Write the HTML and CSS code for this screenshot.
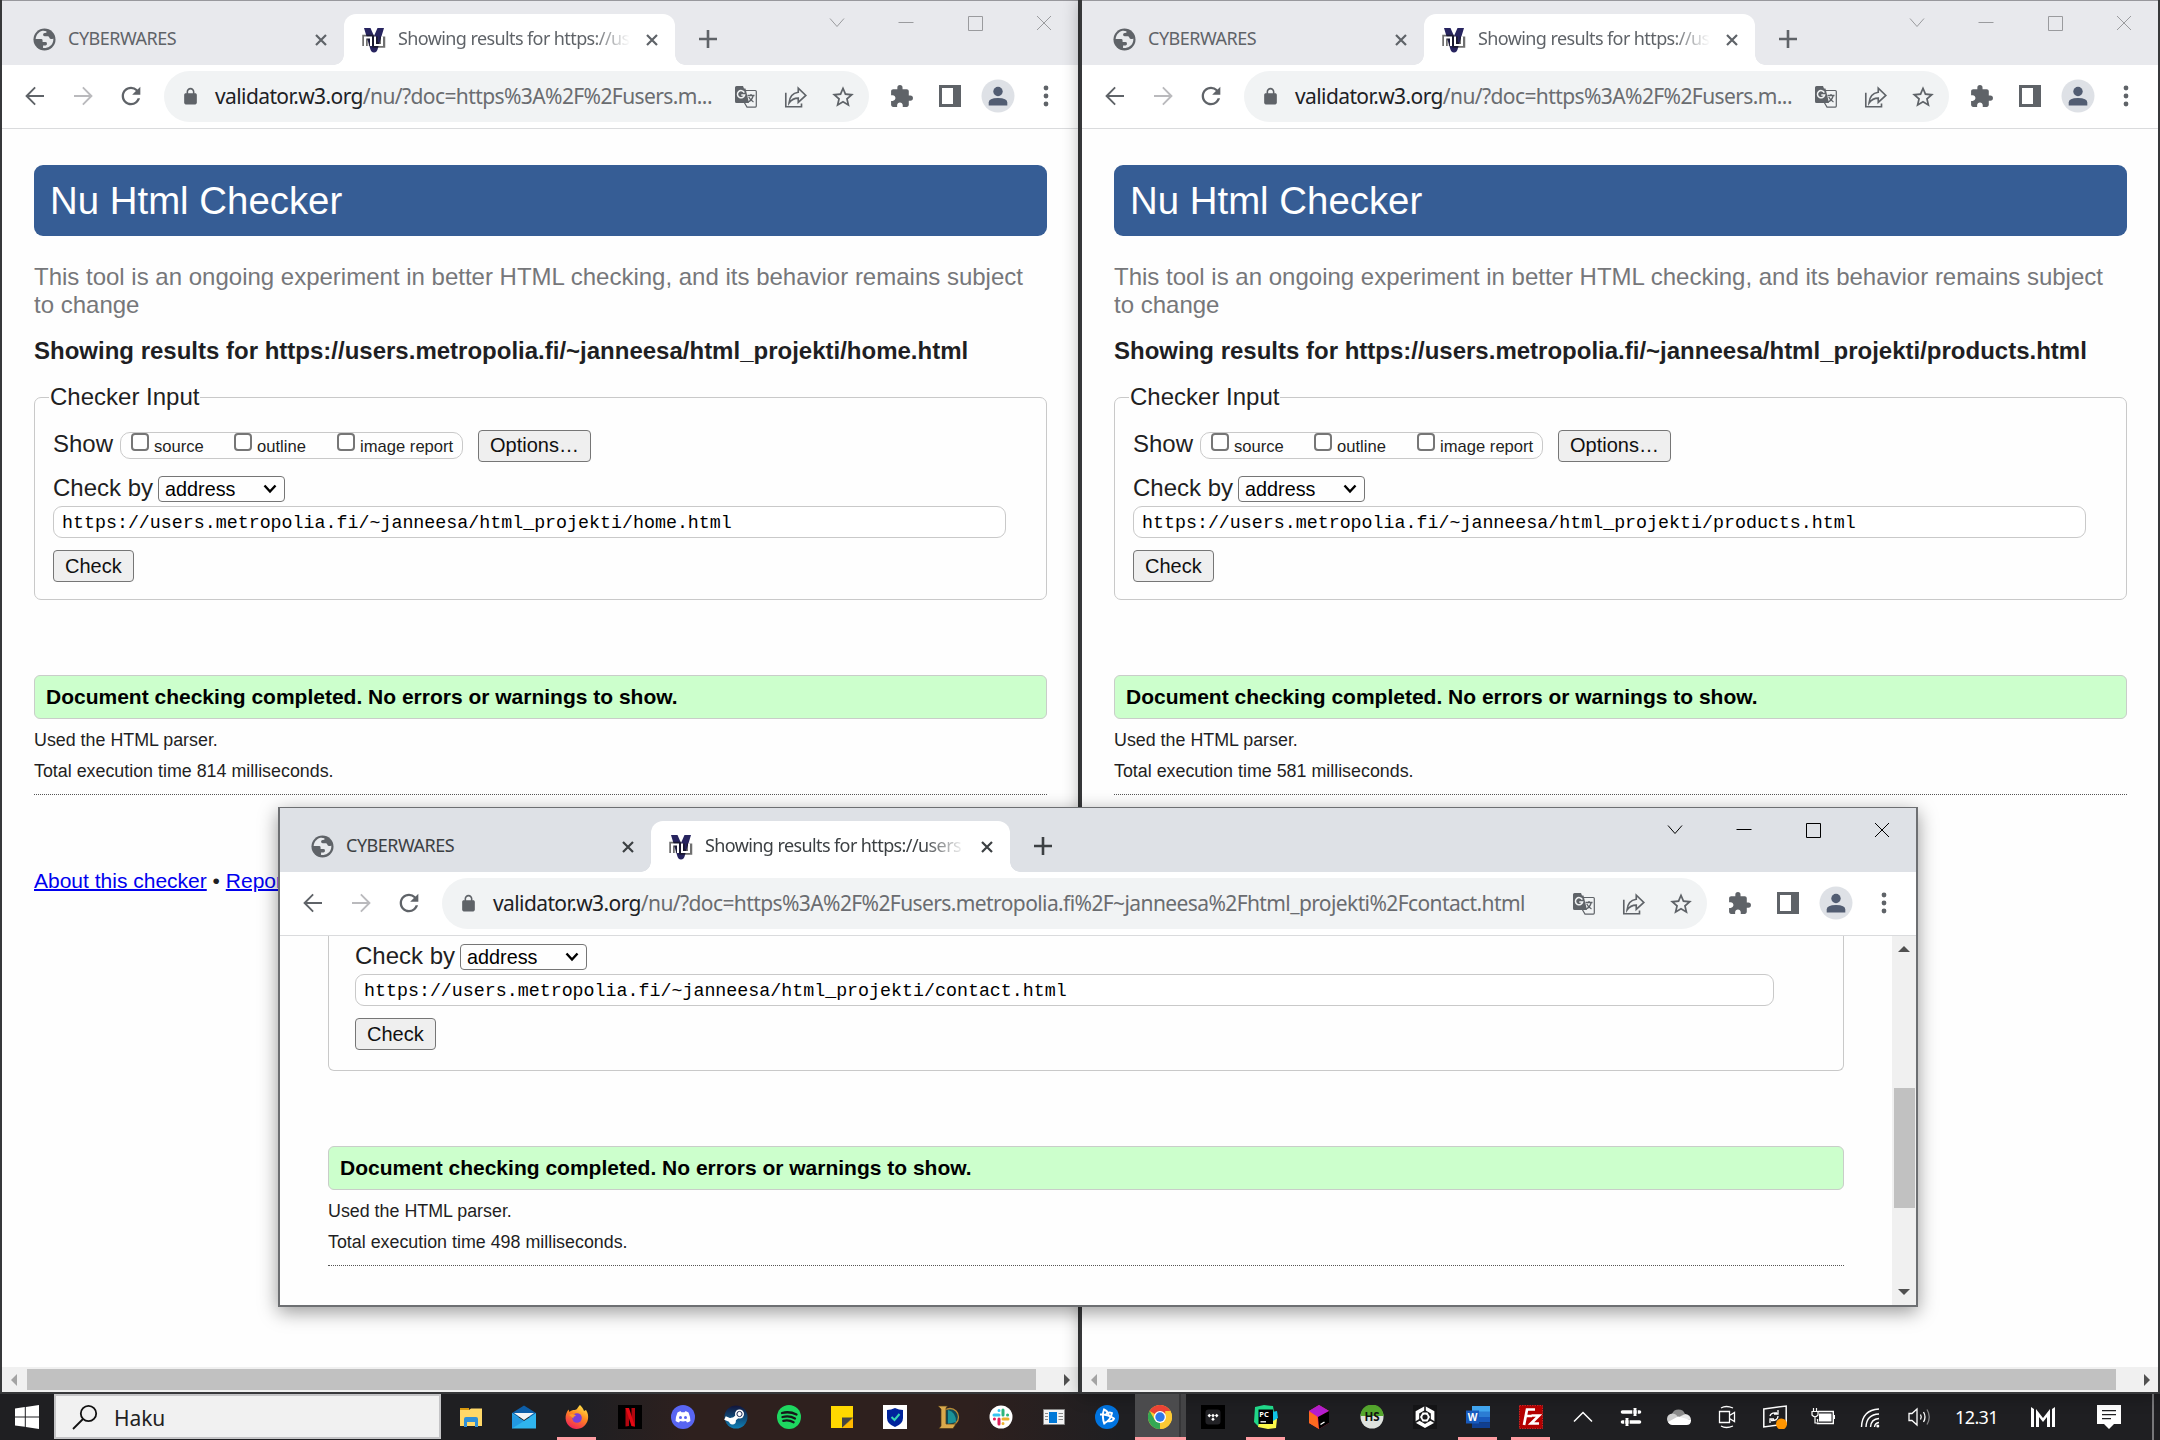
FILE: index.html
```html
<!DOCTYPE html>
<html lang="fi">
<head>
<meta charset="utf-8">
<title>Nu Html Checker</title>
<link rel="stylesheet" href="styles.css">
</head>
<body>
<svg class="sprite" aria-hidden="true">
  <symbol id="globe" viewBox="0 0 24 24"><circle cx="12" cy="12" r="11.500" fill="#5f6368"/><path fill="#e8eaed" d="M9 3.200C5.500 4.500 3 7.800 2.800 11.500H8.500q1.500 0 1.500 1.500v1.500h3q1.500 0 1.500 1.500v1q0 1.200-1.500 1.200h-2.500v2.600c4 .8 8.500-1.500 10-5.300.8-2 .8-3.500.6-4.500q-1 .8-2.500.5c-2-.5-1-2.500-3-3h-3.500q-1.600 0-1.600-1.500t1.600-1.700l1.900-.3V3.500C12 2.800 10.500 2.700 9 3.200z"/></symbol>
  <symbol id="nu" viewBox="0 0 24 26"><path fill="#27245f" d="M2 1h6.500L12 9l3.500-8H22l-6 20q-1 4.500-4 4.500T8 21z"/><path d="M3 19V10.500h6.500V19M13 9.500v8.500h7.500V9.500" fill="none" stroke="#111" stroke-width="5.500" opacity=".6"/><path d="M3 19V10.500h6V19M13 9.500v8.500h7V9.500" fill="none" stroke="#fff" stroke-width="2"/></symbol>
  <symbol id="x" viewBox="0 0 14 14"><path d="M2 2l10 10M12 2L2 12" stroke="currentColor" stroke-width="2.200" fill="none"/></symbol>
  <symbol id="plus" viewBox="0 0 18 18"><path d="M9 0v18M0 9h18" stroke="currentColor" stroke-width="2.600"/></symbol>
  <symbol id="w-down" viewBox="0 0 16 16"><path d="M1 3.500l7 8 7-8" stroke="currentColor" fill="none"/></symbol>
  <symbol id="w-min" viewBox="0 0 16 16"><path d="M.5 7.500h15" stroke="currentColor"/></symbol>
  <symbol id="w-max" viewBox="0 0 16 16"><path d="M1.500 1.500h14v14h-14z" stroke="currentColor" fill="none"/></symbol>
  <symbol id="w-close" viewBox="0 0 16 16"><path d="M1 1l14 14M15 1L1 15" stroke="currentColor" fill="none"/></symbol>
  <symbol id="back" viewBox="0 0 24 24"><path fill="currentColor" d="M21 11H6l6.800-6.900L11.500 2.700 2.200 12l9.300 9.300 1.300-1.400L6 13h15z"/></symbol>
  <symbol id="reload" viewBox="0 0 24 24"><path fill="currentColor" d="M17.650 6.350A7.958 7.958 0 0 0 12 4c-4.420 0-7.990 3.580-7.990 8s3.570 8 7.990 8c3.730 0 6.840-2.550 7.730-6h-2.080A5.990 5.990 0 0 1 12 18c-3.310 0-6-2.690-6-6s2.690-6 6-6c1.660 0 3.140.69 4.220 1.780L13 11h7V4l-2.350 2.350z"/></symbol>
  <symbol id="lock" viewBox="0 0 24 24"><path fill="currentColor" d="M18 8h-1V6c0-2.760-2.240-5-5-5S7 3.240 7 6v2H6c-1.100 0-2 .9-2 2v10c0 1.100.9 2 2 2h12c1.100 0 2-.9 2-2V10c0-1.100-.9-2-2-2zM9 6c0-1.660 1.340-3 3-3s3 1.340 3 3v2H9V6z"/></symbol>
  <symbol id="translate" viewBox="0 0 22 22"><path d="M10 4.500h10.300q1 0 1 1v14.600q0 1-1 1H12L9 16" fill="none" stroke="#5f6368" stroke-width="1.200"/><path fill="#5f6368" d="M1.500 0H8l1 2.500h1.500L14 17H1.500Q0 17 0 15.500v-14Q0 0 1.500 0z"/><path d="M9.300 6.600A3.600 3.600 0 1 0 9.600 9H6.300" fill="none" stroke="#f1f3f4" stroke-width="1.500"/><path d="M12.500 9.500h7M16 8v1.500M18.200 9.500q-1 4.500-5 6.500M13.800 11q1.500 3.300 4.700 5" fill="none" stroke="#5f6368" stroke-width="1.300"/></symbol>
  <symbol id="share" viewBox="0 0 24 24"><path d="M3.500 8V21H18v-3" fill="none" stroke="#5f6368" stroke-width="1.500"/><path d="M6.500 17.500c.5-6 3.300-9.200 8.500-9.900V3.800l7 6.700-7 6.500v-4c-3.700 0-6.300 1.300-8.500 4.500z" fill="none" stroke="#5f6368" stroke-width="1.500"/></symbol>
  <symbol id="star" viewBox="0 0 24 24"><path fill="#5f6368" d="M22 9.240l-7.190-.62L12 2 9.190 8.630 2 9.240l5.460 4.730L5.820 21 12 17.270 18.180 21l-1.630-7.030L22 9.240zM12 15.400l-3.760 2.270 1-4.280-3.320-2.880 4.380-.38L12 6.100l1.710 4.040 4.380.38-3.320 2.880 1 4.280L12 15.400z"/></symbol>
  <symbol id="puzzle" viewBox="0 0 24 24"><path fill="#5f6368" d="M20.500 11H19V7c0-1.100-.9-2-2-2h-4V3.500a2.500 2.500 0 0 0-5 0V5H4c-1.100 0-1.990.9-1.990 2v3.800H3.500c1.490 0 2.700 1.210 2.700 2.700s-1.210 2.700-2.700 2.700H2V20c0 1.100.9 2 2 2h3.800v-1.500c0-1.490 1.210-2.700 2.700-2.700s2.700 1.210 2.700 2.700V22H17c1.100 0 2-.9 2-2v-4h1.500a2.500 2.500 0 0 0 0-5z"/></symbol>
  <symbol id="panel" viewBox="0 0 22 22"><path fill="#5f6368" fill-rule="evenodd" d="M0 0h22v22H0zM3 3v16h11V3z"/></symbol>
  <symbol id="person" viewBox="0 0 34 34"><circle cx="17" cy="17" r="16.500" fill="#dee1e6"/><circle cx="17" cy="12.500" r="4.700" fill="#525d72"/><path fill="#525d72" d="M7.700 26.500v-3q0-4.500 9.300-4.500t9.300 4.500v3z"/></symbol>
  <symbol id="dots" viewBox="0 0 6 22"><g fill="#5f6368"><circle cx="3" cy="3" r="2.400"/><circle cx="3" cy="11" r="2.400"/><circle cx="3" cy="19" r="2.400"/></g></symbol>
  <symbol id="chev" viewBox="0 0 14 10"><path d="M1.500 1.500L7 7.500l5.500-6" fill="none" stroke="#000" stroke-width="2.400"/></symbol>
</svg>

<main class="desktop">
  <section class="window left">
    <div class="tabstrip">
      <div class="tab"><svg class="fav"><use href="#globe"/></svg><span class="tab-title">CYBERWARES</span><svg class="tab-x"><use href="#x"/></svg></div>
      <div class="tab active"><svg class="fav nu"><use href="#nu"/></svg><span class="tab-title">Showing results for https://us</span><svg class="tab-x"><use href="#x"/></svg></div>
      <svg class="plus"><use href="#plus"/></svg>
      <div class="controls"><svg><use href="#w-down"/></svg><svg><use href="#w-min"/></svg><svg><use href="#w-max"/></svg><svg><use href="#w-close"/></svg></div>
    </div>
    <div class="toolbar">
      <svg class="nav"><use href="#back"/></svg><svg class="nav fwd"><use href="#back"/></svg><svg class="nav reload"><use href="#reload"/></svg>
      <div class="omnibox"><svg class="lock"><use href="#lock"/></svg><span class="url"><b>validator.w3.org</b>/nu/?doc=https%3A%2F%2Fusers.m...</span><svg class="i22"><use href="#translate"/></svg><svg class="i26"><use href="#share"/></svg><svg class="i26"><use href="#star"/></svg></div>
      <div class="actions"><svg class="i24"><use href="#puzzle"/></svg><svg class="i22"><use href="#panel"/></svg><svg class="i34"><use href="#person"/></svg><svg class="dots"><use href="#dots"/></svg></div>
    </div>
    <div class="page">
      <h1>Nu Html Checker</h1>
      <p class="note">This tool is an ongoing experiment in better HTML checking, and its behavior remains subject<br>to change</p>
      <h2>Showing results for https://users.metropolia.fi/~janneesa/html_projekti/home.html</h2>
      <fieldset>
        <legend>Checker Input</legend>
        <div class="row show"><span>Show</span><div class="opts"><label><i></i>source</label><label><i></i>outline</label><label><i></i>image report</label></div><button>Options…</button></div>
        <div class="row by"><span>Check by</span><div class="select">address<svg><use href="#chev"/></svg></div></div>
        <input class="doc" value="https://users.metropolia.fi/~janneesa/html_projekti/home.html">
        <button class="check">Check</button>
      </fieldset>
      <p class="success">Document checking completed. No errors or warnings to show.</p>
      <div class="details"><p>Used the HTML parser.</p><p>Total execution time 814 milliseconds.</p></div>
      <p class="links"><a>About this checker</a> • <a>Report an issue</a></p>
    </div>
    <div class="hscroll"><i class="arrow l"></i><div class="thumb"></div><i class="arrow r"></i></div>
  </section>

  <section class="window right">
    <div class="tabstrip">
      <div class="tab"><svg class="fav"><use href="#globe"/></svg><span class="tab-title">CYBERWARES</span><svg class="tab-x"><use href="#x"/></svg></div>
      <div class="tab active"><svg class="fav nu"><use href="#nu"/></svg><span class="tab-title">Showing results for https://us</span><svg class="tab-x"><use href="#x"/></svg></div>
      <svg class="plus"><use href="#plus"/></svg>
      <div class="controls"><svg><use href="#w-down"/></svg><svg><use href="#w-min"/></svg><svg><use href="#w-max"/></svg><svg><use href="#w-close"/></svg></div>
    </div>
    <div class="toolbar">
      <svg class="nav"><use href="#back"/></svg><svg class="nav fwd"><use href="#back"/></svg><svg class="nav reload"><use href="#reload"/></svg>
      <div class="omnibox"><svg class="lock"><use href="#lock"/></svg><span class="url"><b>validator.w3.org</b>/nu/?doc=https%3A%2F%2Fusers.m...</span><svg class="i22"><use href="#translate"/></svg><svg class="i26"><use href="#share"/></svg><svg class="i26"><use href="#star"/></svg></div>
      <div class="actions"><svg class="i24"><use href="#puzzle"/></svg><svg class="i22"><use href="#panel"/></svg><svg class="i34"><use href="#person"/></svg><svg class="dots"><use href="#dots"/></svg></div>
    </div>
    <div class="page">
      <h1>Nu Html Checker</h1>
      <p class="note">This tool is an ongoing experiment in better HTML checking, and its behavior remains subject<br>to change</p>
      <h2>Showing results for https://users.metropolia.fi/~janneesa/html_projekti/products.html</h2>
      <fieldset>
        <legend>Checker Input</legend>
        <div class="row show"><span>Show</span><div class="opts"><label><i></i>source</label><label><i></i>outline</label><label><i></i>image report</label></div><button>Options…</button></div>
        <div class="row by"><span>Check by</span><div class="select">address<svg><use href="#chev"/></svg></div></div>
        <input class="doc" value="https://users.metropolia.fi/~janneesa/html_projekti/products.html">
        <button class="check">Check</button>
      </fieldset>
      <p class="success">Document checking completed. No errors or warnings to show.</p>
      <div class="details"><p>Used the HTML parser.</p><p>Total execution time 581 milliseconds.</p></div>
    </div>
    <div class="hscroll"><i class="arrow l"></i><div class="thumb"></div><i class="arrow r"></i></div>
  </section>

  <section class="window front">
    <div class="tabstrip">
      <div class="tab"><svg class="fav"><use href="#globe"/></svg><span class="tab-title">CYBERWARES</span><svg class="tab-x"><use href="#x"/></svg></div>
      <div class="tab active"><svg class="fav nu"><use href="#nu"/></svg><span class="tab-title">Showing results for https://users</span><svg class="tab-x"><use href="#x"/></svg></div>
      <svg class="plus"><use href="#plus"/></svg>
      <div class="controls"><svg><use href="#w-down"/></svg><svg><use href="#w-min"/></svg><svg><use href="#w-max"/></svg><svg><use href="#w-close"/></svg></div>
    </div>
    <div class="toolbar">
      <svg class="nav"><use href="#back"/></svg><svg class="nav fwd"><use href="#back"/></svg><svg class="nav reload"><use href="#reload"/></svg>
      <div class="omnibox"><svg class="lock"><use href="#lock"/></svg><span class="url"><b>validator.w3.org</b>/nu/?doc=https%3A%2F%2Fusers.metropolia.fi%2F~janneesa%2Fhtml_projekti%2Fcontact.html</span><svg class="i22"><use href="#translate"/></svg><svg class="i26"><use href="#share"/></svg><svg class="i26"><use href="#star"/></svg></div>
      <div class="actions"><svg class="i24"><use href="#puzzle"/></svg><svg class="i22"><use href="#panel"/></svg><svg class="i34"><use href="#person"/></svg><svg class="dots"><use href="#dots"/></svg></div>
    </div>
    <div class="viewport">
      <div class="page">
        <fieldset>
          <div class="row by"><span>Check by</span><div class="select">address<svg><use href="#chev"/></svg></div></div>
          <input class="doc" value="https://users.metropolia.fi/~janneesa/html_projekti/contact.html">
          <button class="check">Check</button>
        </fieldset>
        <p class="success">Document checking completed. No errors or warnings to show.</p>
        <div class="details"><p>Used the HTML parser.</p><p>Total execution time 498 milliseconds.</p></div>
      </div>
      <div class="vscroll"><i class="arrow u"></i><div class="thumb"></div><i class="arrow d"></i></div>
    </div>
  </section>
</main>

<footer class="taskbar">
  <div class="start"><svg width="24" height="24" viewBox="0 0 24 24"><path fill="#fff" d="M0 3.400l9.800-1.300v9.400H0zM10.800 2L24 0v11.500H10.800zM0 12.500h9.800v9.300L0 20.500zM10.800 12.500H24V24l-13.200-2z"/></svg></div>
  <div class="search"><svg width="26" height="26" viewBox="0 0 26 26"><circle cx="16.500" cy="9.500" r="7.700" fill="none" stroke="#111" stroke-width="1.800"/><path d="M11 15L1 25" stroke="#111" stroke-width="1.800"/></svg><span>Haku</span></div>
  <div class="apps">
    <div class="app"><svg viewBox="0 0 24 24"><path fill="#d99a10" d="M1 3h9v4H1z"/><path fill="#ffd868" d="M1 5h9l2-1.500h11V21H1z"/><path fill="#2f8fd8" d="M5 22v-8q0-2 2-2h10q2 0 2 2v8h-3v-5H8v5z"/></svg></div>
    <div class="app"><svg viewBox="0 0 24 24"><path fill="#0d5ea8" d="M0 8L12 .5 24 8v4H0z"/><path fill="#2fb4ee" d="M0 8v15.500h24V8L12 16z"/><path fill="#f2f4f6" d="M2 8h20l-10 7z"/><path fill="#1a86d8" d="M0 9l12 7L0 23.500z" opacity=".6"/></svg></div>
    <div class="app run"><svg viewBox="0 0 24 24"><defs><linearGradient id="ff" x1=".8" y1="0" x2=".3" y2="1"><stop offset="0" stop-color="#ffe94a"/><stop offset=".45" stop-color="#ff8a1f"/><stop offset="1" stop-color="#f0205a"/></linearGradient></defs><path fill="url(#ff)" d="M15 0c2 2 3.500 4 4 6l2-1c2 3 2.500 6 2 9-1 6-6 10-11.500 10S1 19.500.6 13.500C.4 10 1.500 7 3.500 4.500L4.500 7c1.500-1.500 3-2 5-2 3 0 3-3 5.500-5z"/><circle cx="12" cy="13" r="4.800" fill="#7a3fd8"/><path fill="#ff9a2a" d="M4 10c3-2 6-1 7 1-2 0-3 1-2.500 2.500z"/></svg></div>
    <div class="app"><svg viewBox="0 0 24 24"><path d="M0 0h24v24H0z"/><path fill="#b1060f" d="M7.500 3H11v18l-3.500.5zM13.500 3H17v18.500l-3.500-.5z"/><path fill="#e50914" d="M7.500 3H11l6 18.500-3.500-.5z"/></svg></div>
    <div class="app"><svg viewBox="0 0 24 24"><circle cx="12" cy="12" r="12" fill="#5865f2"/><path fill="#fff" d="M6.500 7.500Q9 6.200 9.800 6.300l.6 1q1.600-.2 3.200 0l.6-1q.8-.1 3.300 1.200 2 4.500 1.900 8.500-1.700 1.300-3.400 1.500l-1-1.500q-3 .8-6 0l-1 1.500q-1.700-.2-3.400-1.500-.1-4 1.900-8.500z"/><circle cx="9.500" cy="12.600" r="1.500" fill="#5865f2"/><circle cx="14.500" cy="12.600" r="1.500" fill="#5865f2"/></svg></div>
    <div class="app"><svg viewBox="0 0 24 24"><defs><linearGradient id="st" x2="0" y2="1"><stop stop-color="#12143a"/><stop offset="1" stop-color="#0f7fb5"/></linearGradient></defs><circle cx="12" cy="12" r="11.500" fill="url(#st)"/><path stroke="#fff" stroke-width="4" fill="none" d="M1 13l7 3 7-6"/><circle cx="8.500" cy="16" r="3.400" fill="#fff"/><circle cx="15.500" cy="9" r="4.500" fill="#fff"/><circle cx="15.500" cy="9" r="2.600" fill="#fff" stroke="#1b2a55"/></svg></div>
    <div class="app"><svg viewBox="0 0 24 24"><circle cx="12" cy="12" r="12" fill="#1ed760"/><path fill="none" stroke="#16181a" stroke-linecap="round" stroke-width="2.300" d="M5 8q7.500-2 14.500 1.500M5.500 12q7-1.700 12.500 1.500M6.300 15.800q5.500-1.300 10.300 1.400"/></svg></div>
    <div class="app"><svg viewBox="0 0 24 24"><path fill="#ffd800" d="M1 1h22v12L13 23H1z"/><path fill="#444" d="M12 12.500h11L12 23z"/><path fill="#ffb900" d="M23 13v10H12z"/></svg></div>
    <div class="app"><svg viewBox="0 0 24 24"><path fill="#fff" d="M0 0h24v24H0z"/><path fill="#00249c" d="M12 3q4 2 8 2v8q0 6-8 9-8-3-8-9V5q4 0 8-2z"/><path d="M8.500 12l3 3 5-6" fill="none" stroke="#35d6b5" stroke-width="2"/></svg></div>
    <div class="app"><svg viewBox="0 0 24 24"><circle cx="14" cy="12" r="8.500" fill="#0e4a5a" stroke="#ba8a36" stroke-width="1.300"/><path fill="#1b9298" d="M12 5q8 2 8 12l-8 2z"/><path fill="#d9a94c" stroke="#4b3718" stroke-width=".7" d="M2 1h9.500L10 3v16h10l-3 4.500H3L5 21V4z"/></svg></div>
    <div class="app"><svg viewBox="0 0 24 24"><circle cx="12" cy="12" r="11.500" fill="#fff"/><g fill="none" stroke-linecap="round" stroke-width="3"><path stroke="#36c5f0" d="M10 5.500V5.400M5 10h5"/><path stroke="#2eb67d" d="M14 5v5M18.500 10h.1"/><path stroke="#ecb22e" d="M14 14h5M14 18.500v.1"/><path stroke="#e01e5a" d="M10 14v5M5.500 14h-.1"/></g></svg></div>
    <div class="app"><svg viewBox="0 0 24 24"><path fill="#f3f3f3" stroke="#888" d="M1.500 4.500h21v15h-21z"/><path fill="#0078d7" d="M7 7h8v11H7z"/><path stroke="#888" d="M3 8.500h3M3 11.500h3M3 14.500h3M16.500 8.500H21M16.500 11.500H21M16.500 14.500H21"/></svg></div>
    <div class="app"><svg viewBox="0 0 24 24"><circle cx="12" cy="12" r="12" fill="#0074e0"/><g fill="none" stroke="#fff" stroke-width="1.900"><path d="M9.500 19.500Q6.500 11 9 4.500q3.500 1 5 6.500"/><path d="M5 9.500q8-.5 14 4-1 3.500-6.500 2.500"/><path d="M9.500 18q6-2.500 7.500-10-3.500-1.500-6 1"/></g></svg></div>
    <div class="app run hot"><svg viewBox="0 0 24 24"><circle cx="12" cy="12" r="12" fill="#fcc934"/><path fill="#ea4335" d="M12 12L1.600 6A12 12 0 0 1 22.400 6z"/><path fill="#34a853" d="M12 24A12 12 0 0 1 1.600 6l5.200 9L12 18z"/><path fill="#fcc934" d="M12 24l5.200-9V6h5.200A12 12 0 0 1 12 24z"/><circle cx="12" cy="12" r="6" fill="#fff"/><circle cx="12" cy="12" r="4.700" fill="#2f78ea"/></svg></div>
    <div class="app"><svg viewBox="0 0 24 24"><path d="M0 0h24v24H0z"/><rect x="4.500" y="4.500" width="15" height="15" rx="3" fill="#222226"/><path fill="#fff" d="M8.300 8.800l1.800 1.800-1.800 1.800-1.800-1.800zM12 8.800l1.800 1.800-1.800 1.800-1.800-1.800zM15.700 8.800l1.800 1.800-1.800 1.800-1.800-1.800zM12 12.400l1.800 1.800L12 16l-1.800-1.800z"/></svg></div>
    <div class="app run"><svg viewBox="0 0 24 24"><path fill="#21d789" d="M1 2l9-2 9 1 1 6H5v15l-5-5z"/><path fill="#fcf84a" d="M5 18h14V9l4 5-1 9-8 1-10-2z"/><path fill="#10c4e8" d="M18 7l5-1 1 7-5 3z"/><path d="M4.500 4.500h14.500v14.500H4.500z"/><text x="5.300" y="11.800" class="g-pc">PC</text><path stroke="#fff" stroke-width="1.300" d="M6.500 16.800H12"/></svg></div>
    <div class="app"><svg viewBox="0 0 24 24"><path fill="#fe2857" d="M12 0l10 6v12l-10 6L2 18V6z"/><path fill="#ff6a1f" d="M2 6l8 5 2 13-10-6z"/><path fill="#b51ed0" d="M12 0l10 6-11 6-9-6z"/><path d="M22 6v12l-10 6-1-12z"/><path stroke="#fff" stroke-width="1.400" d="M13.500 19.500l4-2.500"/></svg></div>
    <div class="app"><svg viewBox="0 0 24 24"><circle cx="12" cy="12" r="11.500" fill="#dfe3df"/><path fill="#56a82e" d="M.5 11a11.500 11.500 0 0 1 23 0z"/><text x="12" y="16.200" text-anchor="middle" class="g-hs">HS</text></svg></div>
    <div class="app"><svg viewBox="0 0 24 24"><path d="M0 0h24v24H0z" opacity=".3"/><path fill="none" stroke="#fff" stroke-width="3.600" d="M12 3L19.600 7.400v9.200L12 21l-7.600-4.400V7.400z"/><path stroke="#1c1c1e" stroke-width="1.600" d="M12 0v6M2 17.500l6-3.500M22 17.500L16 14"/><path fill="#fff" d="M9.500 7.600h5l2.500 4.400-2.500 4.400h-5L7 12z"/><circle cx="12" cy="12" r="2.600" fill="#1c1c1e"/></svg></div>
    <div class="app run"><svg viewBox="0 0 24 24"><path fill="#41a5ee" d="M6 1h18v6H6z"/><path fill="#2b7cd3" d="M6 6.500h18V12H6z"/><path fill="#185abd" d="M6 12h18v5.500H6z"/><path fill="#103f91" d="M6 17.500h18V23H6z"/><path fill="#185abd" d="M0 5.500h13v13H0z"/><text x="6.500" y="15.500" text-anchor="middle" class="g-w">W</text></svg></div>
    <div class="app run"><svg viewBox="0 0 24 24"><path fill="#b30000" stroke="#d02020" stroke-dasharray="1.500 1" d="M.5.5h23v23H.5z"/><path fill="none" stroke="#fff" stroke-width="2.700" d="M5 20L8 4.500h8M7 11h6M12.500 10.500H20L12 18.500h8"/></svg></div>
  </div>
  <div class="tray">
    <svg viewBox="0 0 24 24"><path d="M3 16.500L12 7.500l9 9" fill="none" stroke="#fff" stroke-width="1.500"/></svg>
    <svg viewBox="0 0 24 24"><path d="M3.500 7h17M3.500 17h17" stroke="#fff" stroke-width="3.600" stroke-linecap="round"/><path d="M16 3v8M8 13v8" stroke="#fff" stroke-width="3"/><path d="M18.300 4v6M5.700 14v6M13.800 4v6M10.200 14v6" stroke="#202022"/></svg>
    <svg viewBox="0 0 24 24"><path fill="#8c8c8c" d="M5 9a7 7 0 0 1 13 0l-9 7z"/><circle cx="5.500" cy="14" r="5.500" fill="#cfcfcf"/><path fill="#e9e9e9" d="M10 13l8-4a6 6 0 0 1 6 6z"/><path fill="#fff" d="M1 17l10-5.500L24 15q.2 5-4.500 5H5.500Q2.500 20 1 17z"/></svg>
    <svg viewBox="0 0 24 24"><path d="M4.500 6.500h10v11h-10zM14.500 10.500l5-3v9l-5-3M6 3q5-3 12 0M6 21q5 3 12 0" fill="none" stroke="#fff" stroke-width="1.300"/></svg>
    <svg viewBox="0 0 24 24"><path d="M.8 4L23.200 1v18L.8 22z" fill="none" stroke="#fff" stroke-width="1.500"/><path d="M7 11q1-4 7-3M15 5v4h-4M15 11q0 5-7 4.500M7 18v-4h4" fill="none" stroke="#fff" stroke-width="1.300"/><circle cx="18.500" cy="19" r="5.500" fill="#ff9500"/></svg>
    <svg viewBox="0 0 24 24"><path d="M7 6.500h15.300v12H6.500V14" fill="none" stroke="#fff" stroke-width="1.400"/><path fill="#fff" d="M8 8.500h12.500v8H8zM22.500 10h1.500v4h-1.500z"/><path d="M1 6.500h6V10q-3 3.500-6 0zM2.500 3v3.500M5.500 3v3.500M4 12v6h3" fill="#202022" stroke="#fff" stroke-width="1.200"/></svg>
    <svg viewBox="0 0 24 24"><g fill="none" stroke="#fff" stroke-width="1.400"><path d="M2.500 22Q3 5 20 4M7 22Q7.500 9.500 20 9M11.500 22q.5-8 8.500-8.500M15.500 22q.5-4 4.500-4.500"/></g><circle cx="18.800" cy="21" r="1.500" fill="#fff"/></svg>
    <svg viewBox="0 0 24 24"><g fill="none" stroke="#fff" stroke-width="1.300"><path d="M2 8.500h3l5-4.500v16l-5-4.500H2z"/><path d="M13.500 9.500q1.500 2.500 0 5M16.500 7q3 5 0 10"/><path d="M20 4.500q4.500 7.500 0 15" opacity=".45"/></g></svg>
    <time>12.31</time>
    <svg class="m" viewBox="0 0 24 24"><path fill="#fff" d="M0 2l3 2v18H0zM24 2l-3 2v18h3zM5 22V4l7 9 7-9v18h-3v-10l-4 5-4-5v10z"/></svg>
    <svg class="msg" viewBox="0 0 24 24"><path fill="#fff" d="M0 0h24v19h-7l-5 5-5-5H0z"/><path stroke="#202022" stroke-width="1.200" d="M5 5.600h14M5 9.600h14M5 13.600h9"/></svg>
  </div>
</footer>
</body>
</html>
```
FILE: styles.css
```css
* { box-sizing: border-box; }
body { margin: 0; width: 2160px; height: 1440px; overflow: hidden; display: flex; flex-direction: column; background: #37383a; font-family: "Liberation Sans", Arial, sans-serif; color: #1f1f23; }
h1, h2, p { margin: 0; }
svg { flex: none; display: block; }
.sprite { position: absolute; width: 0; height: 0; }

.desktop { position: relative; height: 1394px; flex: none; }
.window { position: absolute; display: flex; flex-direction: column; background: #fefefe; }
.left, .right { top: 0; width: 1076px; height: 1392px; border-top: 1px solid #98989d; color: #1f1f23; }
.left { left: 2px; }
.right { left: 1082px; box-shadow: 0 0 0 2px #37383a, 0 2px 16px 2px rgba(0, 0, 0, .3); }
.front { left: 278px; top: 807px; width: 1640px; height: 500px; border: 2px solid #6d6f72; border-top-width: 1px; box-shadow: 0 5px 18px rgba(0, 0, 0, .4); }

.tabstrip { height: 64px; flex: none; display: flex; align-items: flex-end; padding-left: 12px; background: #e8e9ed; color: #5f6368; }
.front .tabstrip { background: #dee1e6; color: #3c4043; }
.tab { position: relative; width: 330px; height: 51px; display: flex; align-items: center; padding: 0 15px 0 18px; font: 18px/24px "Noto Sans", "Open Sans", sans-serif; }
.tab.active { width: 331px; }
.front .tab { width: 359px; }
.fav { width: 24px; height: 24px; margin-right: 12px; }
.fav.nu { height: 26px; }
.tab-title { flex: 1; white-space: nowrap; overflow: hidden; letter-spacing: -.6px; height: 28px; }
.tab:not(.active) .fav { width: 23px; height: 23px; margin: 0 13px 0 1px; }
.tab:not(.active) .tab-title { margin-left: -1px; letter-spacing: -.5px; }
.tab-x { width: 14px; height: 14px; margin: 0 1px 0 15px; }
.active { background: #fff; border-radius: 12px 12px 0 0; }
.active .tab-title { -webkit-mask-image: linear-gradient(90deg, #000 84%, transparent); mask-image: linear-gradient(90deg, #000 84%, transparent); }
.active::before, .active::after { content: ""; position: absolute; bottom: 0; width: 10px; height: 10px; }
.active::before { left: -10px; background: radial-gradient(circle at 0 0, transparent 9.500px, #fff 10px); }
.active::after { right: -10px; background: radial-gradient(circle at 100% 0, transparent 9.500px, #fff 10px); }
.plus { width: 18px; height: 18px; margin: 0 0 17px 24px; }
.controls { margin: 0 26px auto auto; padding-top: 14px; display: flex; gap: 53px; color: #9a9b9e; }
.controls svg { width: 16px; height: 16px; }
.front .controls { color: #000; }

.toolbar { height: 64px; flex: none; display: flex; align-items: center; padding: 0 0 1px 21px; background: #fff; border-bottom: 1px solid #dadbdd; color: #5f6368; }
.nav { width: 24px; height: 24px; margin-right: 24px; }
.fwd { transform: scaleX(-1); color: #bababd; }
.reload { width: 28px; height: 28px; margin: 0 19px 0 -2px; }
.omnibox { flex: 1; height: 51px; border-radius: 26px; background: #f1f3f4; display: flex; align-items: center; padding: 1px 13px 0 17px; }
.lock { width: 19px; height: 19px; margin-right: 15px; }
.url { flex: 1; height: 32px; white-space: nowrap; font: 21px/30px "Noto Sans", "Open Sans", sans-serif; letter-spacing: -.6px; color: #6a6c70; }
.url b { font-weight: 400; color: #202124; }
.omnibox .i22 { margin-right: 25px; }
.omnibox .i26 + .i26 { margin-left: 22px; }
.i22 { width: 22px; height: 22px; }
.i24 { width: 25px; height: 25px; }
.i26 { width: 26px; height: 26px; }
.i34 { width: 34px; height: 34px; }
.dots { width: 6px; height: 22px; }
.actions { width: 209px; display: flex; align-items: center; padding-left: 20px; }
.actions .i22 { margin-left: 25px; }
.actions .i34 { margin-left: 20px; }
.actions .dots { margin-left: 28px; }

.page { flex: 1; min-height: 0; padding: 36px 31px 0 32px; overflow: hidden; }
h1 { height: 71px; padding-left: 16px; border-radius: 9px; background: #365d95; color: #fff; font-size: 38.400px; font-weight: 400; line-height: 71px; }
.note { margin-top: 27px; font-size: 24px; line-height: 28px; color: #76777a; white-space: nowrap; }
h2 { margin-top: 18px; font-size: 24px; line-height: 28px; white-space: nowrap; }
fieldset { margin: 18px 0 0; height: 217px; padding: 0 40px 0 18px; border: 1px solid #c9c9c9; border-radius: 7px; min-width: 0; font-size: 24px; line-height: 28px; }
legend { margin-left: -4px; padding: 0 1px; }
.row { display: flex; align-items: flex-start; white-space: nowrap; }
.row.show { margin-top: 19px; height: 44px; }
.row.by { height: 32px; }
.opts { width: 343px; height: 27px; margin: 2px 15px 0 7px; border: 1px solid #c9c9c9; border-radius: 10px; display: flex; padding-left: 10px; font-size: 16.600px; }
.opts label { flex: none; width: 103px; height: 18px; display: flex; line-height: 27px; }
.opts label i { flex: none; width: 18px; height: 18px; margin-right: 5px; border: 2px solid #767676; border-radius: 4px; background: #fff; }
button { display: block; height: 32px; padding: 0 11px; border: 1px solid #767676; border-radius: 4px; background: #efefef; font: 20px/28px "Liberation Sans", Arial, sans-serif; color: #111; }
.row button { line-height: 26px; padding-bottom: 2px; }
.select { width: 127px; height: 26px; margin: 2px 0 0 5px; padding: 0 7px 0 6px; border: 1px solid #767676; border-radius: 4px; display: flex; align-items: center; justify-content: space-between; font-size: 19.800px; line-height: 24px; color: #000; }
.select svg { width: 14px; height: 10px; }
.doc { display: block; width: 100%; height: 32px; padding: 1px 8px 0; border: 1px solid #c9c9c9; border-radius: 9px; background: #fff; color: #000; font: 18.310px/28px "Liberation Mono", monospace; }
.check { margin-top: 12px; }
.success { height: 44px; margin-top: 75px; padding-left: 11px; border: 1px solid #c9cdc9; border-radius: 6px; background: #cfc; color: #000; font-size: 21px; font-weight: 700; line-height: 42px; }
.details { padding: 6px 0 7px; border-bottom: 1px dotted #555; font-size: 17.850px; line-height: 31px; }
.links { margin-top: 71px; font-size: 21px; line-height: 30px; }
.links a { color: #00e; text-decoration: underline; text-decoration-thickness: 2px; }

.hscroll { height: 25px; flex: none; display: flex; align-items: center; background: #f0f0f0; }
.thumb { background: #c1c1c1; }
.hscroll .thumb { width: 1009px; height: 21px; }
.arrow { border: 6px solid transparent; }
.arrow.l { margin: 0 10px 0 3px; border-right-color: #a3a3a3; border-left-width: 6px; }
.arrow.r { margin-left: 28px; border-left-color: #505050; }

.front .viewport { flex: 1; min-height: 0; display: flex; }
.front .page { padding: 0 48px 0 48px; }
.front fieldset { margin: 0; height: 135px; border-top: 0; border-radius: 0 0 6px 6px; padding: 6px 69px 0 26px; }
.vscroll { width: 24px; display: flex; flex-direction: column; align-items: center; background: #f0f0f0; }
.vscroll .thumb { width: 21px; height: 120px; }
.arrow.u { margin: 4px 0 136px; border-bottom-color: #505050; }
.arrow.d { margin-top: 81px; border-top-color: #505050; }

.taskbar { flex: none; height: 46px; display: flex; background: linear-gradient(90deg, #1f1f22 0, #1f1f22 27%, #2e201e 32%, #2e201e 45%, #1f1f22 52%, #1f1f22); color: #fff; }
.start { width: 54px; padding: 11px 0 0 15px; }
.search { width: 387px; height: 45px; display: flex; align-items: center; padding-left: 16px; border: 2px solid #c4c4c6; background: #f1f1f1; color: #222; font: 21px/30px "Noto Sans", "Open Sans", sans-serif; }
.search span { margin: 2px 0 0 16px; letter-spacing: -.1px; }
.apps { display: flex; padding-left: 3px; }
.app { width: 53px; height: 46px; display: flex; align-items: center; justify-content: center; }
.app svg { width: 24px; height: 24px; }
.run { position: relative; }
.run::after { content: ""; position: absolute; left: 7px; bottom: 0; width: 39px; height: 3px; background: #ff9da3; }
.hot { background: linear-gradient(90deg, transparent 2px, #4b4b4d 2px 46px, #363638 46px 48px, #444446 48px); }
.hot::after { left: 2px; width: 51px; }
.g-pc { font: 700 7.500px "Noto Sans", sans-serif; fill: #fff; }
.g-hs { font: 700 11.500px "Noto Sans", sans-serif; fill: #111; }
.g-w { font: 700 10px "Noto Sans", sans-serif; fill: #fff; }
.tray { width: 600px; margin-left: auto; display: flex; align-items: center; padding-left: 11px; background: linear-gradient(#77777a, #77777a) 592px 0 / 2px 100% no-repeat; }
.tray svg { width: 24px; height: 24px; margin-right: 24px; }
.tray time { width: 41px; margin: 0 35px 0 0; font: 18px/24px "Noto Sans", sans-serif; letter-spacing: -.6px; }
.tray .m { margin-right: 42px; }
.tray .msg { margin: 0; }
```
